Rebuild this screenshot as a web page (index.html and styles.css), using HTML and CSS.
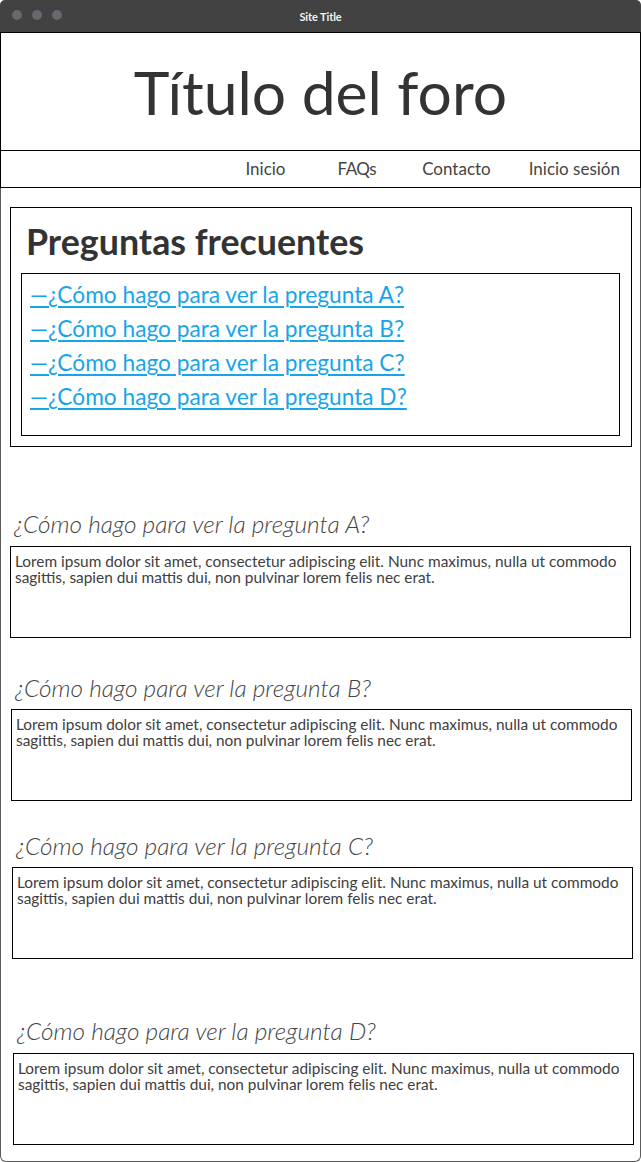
FILE: index.html
```html
<!DOCTYPE html>
<html lang="es">
<head>
<meta charset="utf-8">
<title>Site Title</title>
<link rel="stylesheet" href="styles.css">
</head>
<body>
<div class="window">
  <div class="titlebar">
    <div class="dots"><span class="dot"></span><span class="dot"></span><span class="dot"></span></div>
    <div class="titlebar-text">Site Title</div>
  </div>
  <div class="frame">
    <header class="site-header">
      <h1 class="site-title">Título del foro</h1>
    </header>
    <nav class="nav">
      <a class="nav-item" href="#">Inicio</a>
      <a class="nav-item nav-faqs" href="#">FAQs</a>
      <a class="nav-item nav-contact" href="#">Contacto</a>
      <a class="nav-item nav-login" href="#">Inicio sesión</a>
    </nav>

    <section class="faq">
      <h2 class="faq-title">Preguntas frecuentes</h2>
      <ul class="faq-list">
        <li><a href="#a">—¿Cómo hago para ver la pregunta A?</a></li>
        <li><a href="#b">—¿Cómo hago para ver la pregunta B?</a></li>
        <li><a href="#c">—¿Cómo hago para ver la pregunta C?</a></li>
        <li><a href="#d">—¿Cómo hago para ver la pregunta D?</a></li>
      </ul>
    </section>

    <section class="qa qa-a" id="a">
      <h3 class="qa-q">¿Cómo hago para ver la pregunta A?</h3>
      <div class="qa-box">Lorem ipsum dolor sit amet, consectetur adipiscing elit. Nunc maximus, nulla ut commodo sagittis, sapien dui mattis dui, non pulvinar lorem felis nec erat.</div>
    </section>

    <section class="qa qa-b" id="b">
      <h3 class="qa-q">¿Cómo hago para ver la pregunta B?</h3>
      <div class="qa-box">Lorem ipsum dolor sit amet, consectetur adipiscing elit. Nunc maximus, nulla ut commodo sagittis, sapien dui mattis dui, non pulvinar lorem felis nec erat.</div>
    </section>

    <section class="qa qa-c" id="c">
      <h3 class="qa-q">¿Cómo hago para ver la pregunta C?</h3>
      <div class="qa-box">Lorem ipsum dolor sit amet, consectetur adipiscing elit. Nunc maximus, nulla ut commodo sagittis, sapien dui mattis dui, non pulvinar lorem felis nec erat.</div>
    </section>

    <section class="qa qa-d" id="d">
      <h3 class="qa-q">¿Cómo hago para ver la pregunta D?</h3>
      <div class="qa-box">Lorem ipsum dolor sit amet, consectetur adipiscing elit. Nunc maximus, nulla ut commodo sagittis, sapien dui mattis dui, non pulvinar lorem felis nec erat.</div>
    </section>
  </div>
</div>
</body>
</html>
```

FILE: styles.css
```css
* { box-sizing: border-box; }

html, body {
  margin: 0;
  padding: 0;
  background: #ffffff;
}

body {
  font-family: "Lato", "Open Sans", sans-serif;
  color: #444444;
  width: 641px;
  height: 1162px;
  overflow: hidden;
}

.window {
  width: 641px;
  height: 1162px;
  display: flex;
  flex-direction: column;
}

.titlebar {
  height: 32px;
  flex: 0 0 32px;
  background: #424242;
  border-radius: 5px 5px 0 0;
  display: flex;
  align-items: center;
  justify-content: center;
  position: relative;
}

.dots {
  position: absolute;
  left: 12px;
  top: 10px;
  display: flex;
  gap: 10px;
}

.dot {
  width: 10px;
  height: 10px;
  border-radius: 50%;
  background: #6c6671;
}

.titlebar-text {
  font-family: "Lato", sans-serif;
  font-weight: bold;
  font-size: 11px;
  color: #f2f2f2;
  letter-spacing: -0.1px;
}

.frame {
  flex: 1 1 auto;
  border: 1px solid #5c5c5c;
  border-top: none;
  border-radius: 0 0 6px 6px;
}

.site-header {
  height: 118px;
  margin: 0 -1px;
  border: 1px solid #000000;
  border-bottom: none;
  display: flex;
  align-items: center;
  justify-content: center;
  padding-top: 1px;
}

.site-title {
  margin: 0;
  font-weight: normal;
  font-size: 60.6px;
  line-height: 60px;
  color: #333333;
}

.nav {
  height: 38px;
  margin: 0 -1px;
  border: 1px solid #000000;
  display: flex;
  justify-content: flex-end;
  align-items: center;
  padding-right: 20px;
  padding-bottom: 2px;
}

.nav-item {
  font-size: 17px;
  color: #444444;
  text-decoration: none;
}

.nav-faqs { margin-left: 52px; letter-spacing: -0.5px; }
.nav-contact { margin-left: 46px; }
.nav-login { margin-left: 38px; }

.faq {
  margin: 19px 0 0 9px;
  width: 622px;
  border: 1px solid #000000;
  padding: 13px 0 10px 0;
}

.faq-title {
  margin: 0 0 10px 0;
  padding-left: 15px;
  font-size: 35.8px;
  line-height: 42px;
  font-weight: bold;
  color: #333333;
}

.faq-list {
  list-style: none;
  margin: 0 11px 0 10px;
  padding: 4px 0 21px 8px;
  border: 1px solid #000000;
}

.faq-list li {
  font-size: 22.7px;
  line-height: 34px;
}

.faq-list a {
  color: #17a5ea;
  text-decoration: underline;
  text-underline-offset: 3px;
  text-decoration-thickness: 2px;
}

.qa {
  width: 621px;
}

.qa-q {
  margin: 0 0 7px 0;
  padding: 2px 0 0 4px;
  font-size: 24.4px;
  line-height: 28px;
  font-style: italic;
  font-weight: 300;
  color: #444444;
}

.qa-box {
  height: 92px;
  border: 1px solid #000000;
  padding: 6px 4px 4px 4px;
  font-size: 15.4px;
  line-height: 16px;
  color: #404040;
}

.qa-a { margin: 61px 0 0 9px; }
.qa-a .qa-q { margin-bottom: 8px; }
.qa-b { margin: 34px 0 0 10px; }
.qa-c { margin: 29px 0 0 11px; }
.qa-d { margin: 56px 0 0 12px; }
.qa-d .qa-q { margin-bottom: 8px; }
```
